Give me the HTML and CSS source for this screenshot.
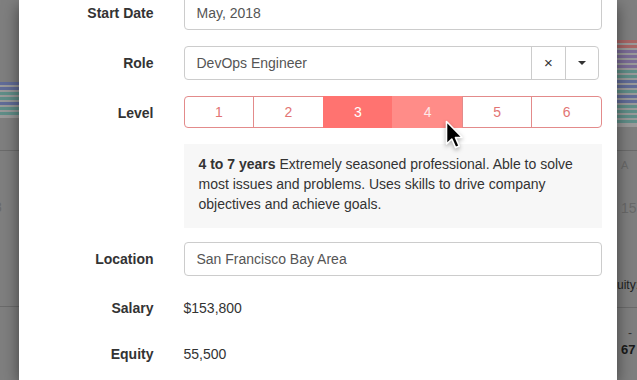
FILE: index.html
```html
<!DOCTYPE html>
<html>
<head>
<meta charset="utf-8">
<link rel="stylesheet" href="styles.css">
</head>
<body>
<div class="page">
  <div class="side side-left">
    <div class="stripes stripes-left">
      <div class="st blue"></div><div class="st blue"></div><div class="st teal"></div><div class="st teal"></div><div class="st blue"></div><div class="st teal"></div><div class="st teal"></div>
    </div>
    <div class="rule rule-l1"></div>
    <div class="frag frag-l">8</div>
    <div class="rule rule-l2"></div>
  </div>
  <div class="middle"></div>
  <div class="side side-right">
    <div class="stripes stripes-right">
      <div class="st red"></div><div class="st red"></div><div class="st pur"></div><div class="st pur"></div><div class="st pur"></div><div class="st pur"></div><div class="st teal"></div><div class="st teal"></div><div class="st blue"></div><div class="st blue"></div><div class="st teal"></div><div class="st blue"></div><div class="st blue"></div><div class="st teal"></div><div class="st teal"></div><div class="st teal"></div><div class="st teal"></div>
    </div>
    <div class="rule rule-r1"></div>
    <div class="frag frag-a">A</div>
    <div class="frag frag-15">15</div>
    <div class="frag frag-eq">uity:</div>
    <div class="rule rule-r2"></div>
    <div class="frag frag-dash">-</div>
    <div class="frag frag-67">67</div>
  </div>
</div>

<div class="modal">
  <div class="form">
    <div class="row">
      <div class="label">Start Date</div>
      <div class="ctl"><div class="field">May, 2018</div></div>
    </div>
    <div class="row">
      <div class="label">Role</div>
      <div class="ctl">
        <div class="select">
          <div class="select-value">DevOps Engineer</div>
          <div class="select-clear">×</div>
          <div class="select-arrow"><span class="caret"></span></div>
        </div>
      </div>
    </div>
    <div class="row row-level">
      <div class="label">Level</div>
      <div class="ctl">
        <div class="levels">
          <div class="lvl">1</div>
          <div class="lvl">2</div>
          <div class="lvl lvl-on">3</div>
          <div class="lvl lvl-hover">4</div>
          <div class="lvl">5</div>
          <div class="lvl">6</div>
        </div>
        <div class="desc"><b>4 to 7 years</b> Extremely seasoned professional. Able to solve most issues and problems. Uses skills to drive company objectives and achieve goals.</div>
      </div>
    </div>
    <div class="row row-loc">
      <div class="label">Location</div>
      <div class="ctl"><div class="field">San Francisco Bay Area</div></div>
    </div>
    <div class="row row-static">
      <div class="label">Salary</div>
      <div class="ctl"><div class="static">$153,800</div></div>
    </div>
    <div class="row row-static">
      <div class="label">Equity</div>
      <div class="ctl"><div class="static">55,500</div></div>
    </div>
  </div>
</div>

<svg class="cursor" width="18" height="30" viewBox="0 0 18 30">
  <path d="M1.5 1.5 L1.5 24 L6.8 19 L10.6 27.6 L14.2 26 L10.5 17.6 L17 17.2 Z" fill="#000" stroke="#fff" stroke-width="1.6" stroke-linejoin="round"/>
</svg>
</body>
</html>
```

FILE: styles.css
```css
html, body {
  margin: 0;
  padding: 0;
  width: 637px;
  height: 380px;
  overflow: hidden;
  background: #7f7f7f;
  font-family: "Liberation Sans", Arial, Helvetica, sans-serif;
  font-size: 14px;
}

.page {
  display: grid;
  grid-template-columns: 19px 598px 20px;
  height: 380px;
}

.side {
  position: relative;
  overflow: hidden;
}

.stripes {
  display: flex;
  flex-direction: column;
  gap: 2px;
  background: #9a9a9a;
}
.stripes-left { margin-top: 82px; height: 36px; }
.stripes-right { margin-top: 40px; height: 87px; }

.st { height: 3px; flex: none; }
.st.red { background: #a86565; }
.st.pur { background: #7b6c97; }
.st.teal { background: #5f8e88; }
.st.blue { background: #616c98; }

.rule { height: 1px; background: #6b6b6b; }
.rule-l1 { margin-top: 32px; }
.rule-l2 { margin-top: 155px; }
.rule-r1 { margin-top: 23px; }
.rule-r2 { margin-top: 156px; }

.frag {
  position: absolute;
  white-space: nowrap;
  color: #6a6a6a;
  line-height: 16px;
}
.frag-l { left: -6px; top: 199px; }
.frag-a { left: 4px; top: 157px; font-size: 11px; }
.frag-15 { left: 4px; top: 200px; }
.frag-eq { left: 0; top: 277px; color: #222; font-size: 12px; }
.frag-dash { left: 11px; top: 325px; color: #333; font-size: 12px; }
.frag-67 { left: 4px; top: 342px; color: #1a1a1a; font-weight: bold; font-size: 13px; }

.modal {
  position: absolute;
  top: 0;
  left: 19px;
  width: 598px;
  height: 380px;
  background: #fff;
  box-shadow: 0 5px 15px rgba(0, 0, 0, 0.5);
  overflow: hidden;
}

.form {
  margin-top: -4px;
  color: #333;
}

.row {
  display: grid;
  grid-template-columns: 149.5px 1fr;
  margin-bottom: 16px;
}
.row-level { margin-bottom: 14px; }
.row-loc { margin-bottom: 15px; }
.row-static { margin-bottom: 15px; }

.label {
  padding-right: 15px;
  padding-top: 7px;
  line-height: 20px;
  text-align: right;
  font-weight: bold;
  color: #333;
}

.ctl {
  padding: 0 15px;
}

.field {
  box-sizing: border-box;
  height: 34px;
  padding: 6px 12px;
  line-height: 20px;
  border: 1px solid #ccc;
  border-radius: 4px;
  color: #555;
}

.select {
  box-sizing: border-box;
  display: flex;
  height: 34px;
  margin-right: 3px;
  border: 1px solid #ccc;
  border-radius: 4px;
  color: #555;
}
.select-value {
  flex: 1;
  padding: 6px 12px;
  line-height: 20px;
}
.select-clear {
  width: 33px;
  border-left: 1px solid #ccc;
  text-align: center;
  line-height: 32px;
  font-size: 15px;
  color: #333;
}
.select-arrow {
  width: 32px;
  border-left: 1px solid #ccc;
  display: flex;
  align-items: center;
  justify-content: center;
}
.caret {
  width: 0;
  height: 0;
  border-left: 4px solid transparent;
  border-right: 4px solid transparent;
  border-top: 4px solid #333;
}

.levels {
  display: flex;
  height: 32px;
}
.lvl {
  flex: 1;
  box-sizing: border-box;
  border: 1px solid #e38b8b;
  margin-left: -1px;
  text-align: center;
  line-height: 30px;
  color: #e27474;
}
.lvl:first-child {
  margin-left: 0;
  border-radius: 4px 0 0 4px;
}
.lvl:last-child {
  border-radius: 0 4px 4px 0;
}
.lvl-on {
  background: #ff7370;
  border-color: #ff7370;
  color: #fff;
}
.lvl-hover {
  background: #ff8c88;
  border-color: #ff8c88;
  color: #fde8e8;
}

.desc {
  margin-top: 16px;
  background: #f7f7f7;
  padding: 10px 15px 14px;
  line-height: 20px;
  color: #333;
}

.static {
  padding-top: 7px;
  padding-bottom: 4px;
  line-height: 20px;
  color: #333;
}

.cursor {
  position: absolute;
  left: 445px;
  top: 120px;
  filter: drop-shadow(0 2px 2px rgba(0, 0, 0, 0.3));
}
```
